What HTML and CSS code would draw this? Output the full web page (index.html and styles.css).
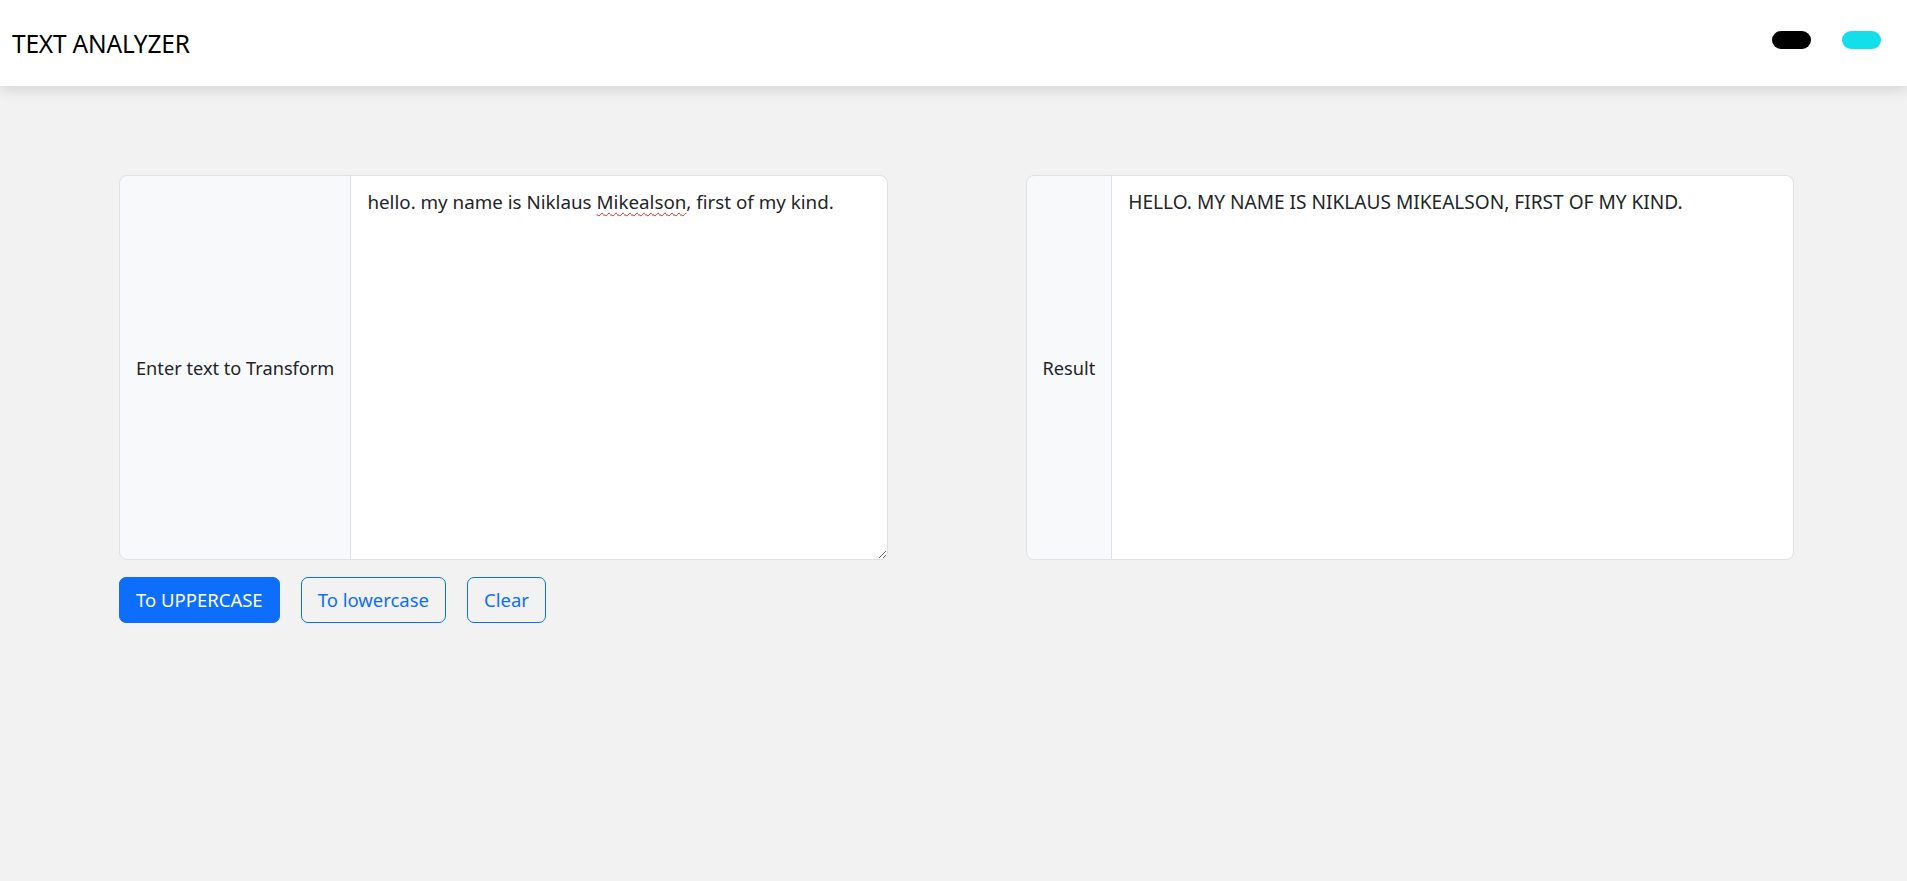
FILE: index.html
```html
<!DOCTYPE html>
<html lang="en">
<head>
<meta charset="utf-8">
<title>Text Analyzer</title>
<link rel="stylesheet" href="styles.css">
</head>
<body>
<header class="navbar">
  <span class="brand">TEXT ANALYZER</span>
  <div class="toggles">
    <span class="pill pill-dark"></span>
    <span class="pill pill-info"></span>
  </div>
</header>
<main class="page">
  <section class="col">
    <div class="input-group">
      <span class="group-label">Enter text to Transform</span>
      <div class="group-field editor" contenteditable="true">hello. my name is Niklaus <span class="misspelled">Mikealson</span>, first of my kind.</div>
    </div>
    <div class="actions">
      <button class="btn btn-primary">To UPPERCASE</button>
      <button class="btn btn-outline">To lowercase</button>
      <button class="btn btn-outline">Clear</button>
    </div>
  </section>
  <section class="col">
    <div class="input-group">
      <span class="group-label">Result</span>
      <div class="group-field result">HELLO. MY NAME IS NIKLAUS MIKEALSON, FIRST OF MY KIND.</div>
    </div>
  </section>
</main>
</body>
</html>
```

FILE: styles.css
```css
* { box-sizing: border-box; }
html, body { margin: 0; padding: 0; }
body {
  background: #f2f2f2;
  font-family: "Noto Sans", "Open Sans", sans-serif;
  color: #212529;
  min-height: 881px;
}
.navbar {
  height: 86px;
  background: #fff;
  display: flex;
  align-items: center;
  justify-content: space-between;
  padding: 0 26px 0 12px;
  box-shadow: 0 4px 14px rgba(0,0,0,0.12);
  position: relative;
}
.brand {
  font-size: 24.5px;
  color: #000;
  letter-spacing: -0.2px;
}
.toggles {
  display: flex;
  gap: 31px;
  margin-top: -6px;
}
.pill {
  width: 39px;
  height: 18px;
  border-radius: 9px;
  display: block;
}
.pill-dark { background: #000; }
.pill-info { background: #13dfeb; }

.page {
  display: flex;
  gap: 138px;
  padding: 89px 113px 0 119px;
}
.col { flex: 1; min-width: 0; }
.input-group {
  display: flex;
  height: 385px;
  font-size: 18.2px;
}
.group-label {
  display: flex;
  align-items: center;
  padding: 0 16px;
  background: #f8f9fa;
  border: 1px solid #dee2e6;
  border-radius: 8px 0 0 8px;
  white-space: nowrap;
  color: #212529;
}
.group-field {
  flex: 1;
  background: #fff;
  border: 1px solid #dee2e6;
  border-left: none;
  border-radius: 0 8px 8px 0;
  padding: 12px 16px 8px;
  line-height: 1.5;
  font-size: 18.8px;
  color: #212529;
  outline: none;
}
.result { font-size: 19.1px; }
.editor {
  resize: vertical;
  overflow: auto;
}
.misspelled {
  text-decoration: underline wavy #e02020;
  text-decoration-thickness: 1px;
  text-underline-offset: 3px;
}
.actions {
  display: flex;
  gap: 21px;
  margin-top: 17px;
}
.btn {
  font-family: inherit;
  font-size: 18.5px;
  line-height: 30px;
  padding: 7px 16px;
  border-radius: 7px;
  border: 1px solid #0d6efd;
  cursor: pointer;
}
.btn-primary { background: #0d6efd; color: #fff; }
.btn-outline { background: transparent; color: #0d6efd; }
```
